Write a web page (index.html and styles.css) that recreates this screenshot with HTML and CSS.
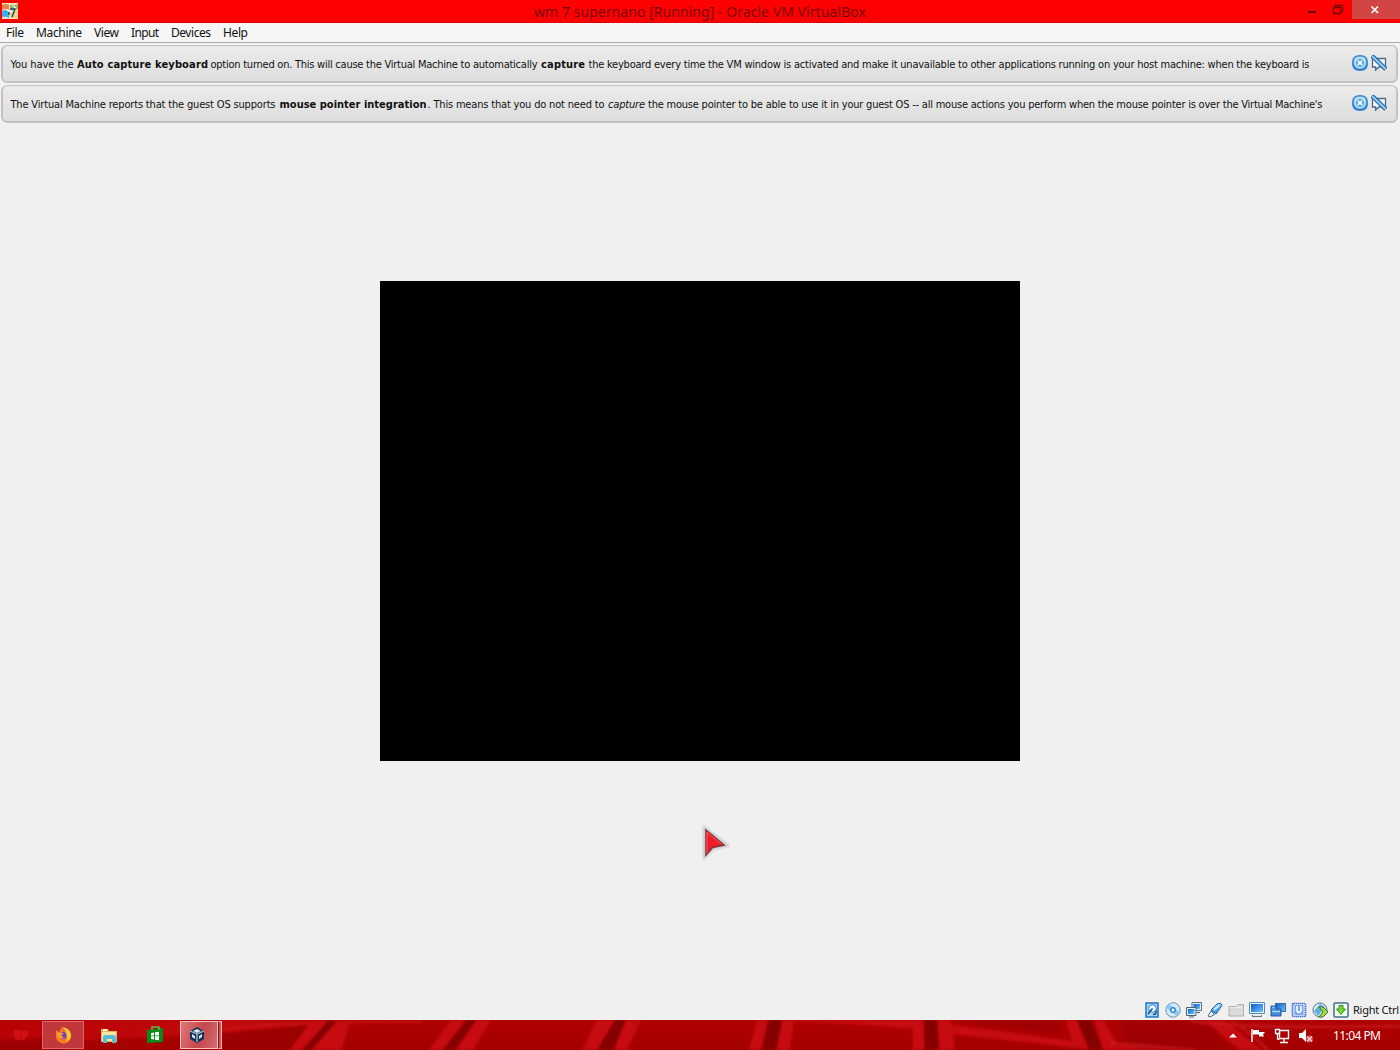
FILE: index.html
```html
<!DOCTYPE html>
<html lang="en">
<head>
<meta charset="utf-8">
<title>Oracle VM VirtualBox</title>
<link rel="stylesheet" href="styles.css">
</head>
<body>
<svg class="defs" width="0" height="0" aria-hidden="true">
  <defs>
    <linearGradient id="blue" x1="0" y1="0" x2="0" y2="1"><stop offset="0" stop-color="#9ad4fa"/><stop offset="1" stop-color="#2e8ade"/></linearGradient>
    <linearGradient id="screen" x1="0" y1="0" x2="1" y2="1"><stop offset="0" stop-color="#0a5cc8"/><stop offset="1" stop-color="#6cc4ff"/></linearGradient>
    <linearGradient id="wall" x1="0" y1="0" x2="0" y2="1"><stop offset="0" stop-color="#b00003"/><stop offset="1" stop-color="#a40000"/></linearGradient>
    <linearGradient id="sweep"><stop offset="0" stop-color="#b80206"/><stop offset=".6" stop-color="#c20a0e"/><stop offset="1" stop-color="#b00003"/></linearGradient>
    <symbol id="close" viewBox="0 0 16 16"><rect x=".8" y=".8" width="14.4" height="14.4" rx="5.5" fill="url(#blue)" stroke="#2a78c0" stroke-width="1.2"/><circle cx="8" cy="7.800" r="5" fill="#5aaae8" stroke="#e5f4ff" stroke-width="1.200"/><path d="M5.700 5.500l4.600 4.600m0-4.600l-4.600 4.600" stroke="#fff" stroke-width="1.600"/></symbol>
    <symbol id="mute" viewBox="0 0 16 16"><path d="M1.500 3.500h13v8.500H8l-3.500 3.200.3-3.200H1.500z" fill="#f8fafb" stroke="#4c6784" stroke-width="1.300"/><path d="M.8.800l14 13.400" stroke="#1f609f" stroke-width="4.400"/><path d="M1.200 1.200l13.300 12.700" stroke="#8bcbf6" stroke-width="2.200"/></symbol>
  </defs>
</svg>
<header class="titlebar">
  <svg class="app-icon" viewBox="0 0 16 16"><path fill="#eee2bc" d="M0 0h16v16H0z"/><path fill="#e5824e" d="M0 2q4-2 7 0v5q-3-2-7 0z"/><path fill="#83b968" d="M8 2q4 1 8-1v5q-4 2-8 1z"/><path fill="#35b4f4" d="M0 8q4-2 7 0v7q-3-2-7-1z"/><path fill="#eed487" d="M8 9q4 1 8-1v6q-4 2-8 1z"/><path d="M8 6h5l-3 8M7 7v5" fill="none" stroke="#34475c" stroke-width="1.500"/><path d="M5 7l4 2M11 3l3 2" stroke="#fff" stroke-width="1.500"/></svg>
  <svg class="caption" width="340" height="23"><text x="4" y="17" textLength="332">wm 7 supernano [Running] - Oracle VM VirtualBox</text></svg>
  <div class="controls">
    <svg width="52" height="19" viewBox="0 0 52 19"><path d="M8 12h8" stroke="#650000" stroke-width="2"/><path d="M33.500 7.500h7v6h-7zM35.500 7V5.500h7v6H41" fill="none" stroke="#780000" stroke-width="1.300"/></svg>
    <div class="close-window"><svg width="10" height="10" viewBox="0 0 10 10"><path d="M1.500 1.500l6.500 6.500M8 1.500L1.500 8" stroke="#fff" stroke-width="1.700"/></svg></div>
  </div>
</header>
<nav class="menubar">
  <svg width="260" height="19"><text x="6" y="14" textLength="18">File</text><text x="36" y="14" textLength="46">Machine</text><text x="94" y="14" textLength="25">View</text><text x="131" y="14" textLength="28">Input</text><text x="171" y="14" textLength="40">Devices</text><text x="223" y="14" textLength="25">Help</text></svg>
</nav>
<section class="notices">
  <div class="notice">
    <svg class="message" width="1340" height="36"><text x="7.500" y="22" textLength="63">You have the</text><text class="bold" x="74" y="22" textLength="131">Auto capture keyboard</text><text x="207.500" y="22" textLength="327">option turned on. This will cause the Virtual Machine to automatically</text><text class="bold" x="538" y="22" textLength="44">capture</text><text x="585.500" y="22" textLength="721">the keyboard every time the VM window is activated and make it unavailable to other applications running on your host machine: when the keyboard is</text></svg>
    <div class="actions"><svg><use href="#close"/></svg><svg><use href="#mute"/></svg></div>
  </div>
  <div class="notice">
    <svg class="message" width="1340" height="36"><text x="7.500" y="22" textLength="265">The Virtual Machine reports that the guest OS supports</text><text class="bold" x="276.500" y="22" textLength="147">mouse pointer integration</text><text x="424.500" y="22" textLength="177">. This means that you do not need to</text><text class="italic" x="605" y="22" textLength="37">capture</text><text x="645" y="22" textLength="674.500">the mouse pointer to be able to use it in your guest OS -- all mouse actions you perform when the mouse pointer is over the Virtual Machine's</text></svg>
    <div class="actions"><svg><use href="#close"/></svg><svg><use href="#mute"/></svg></div>
  </div>
</section>
<main class="machine">
  <div class="display"></div>
  <svg class="pointer" viewBox="0 0 32 38"><path class="pointer-glow" d="M7 5v27l8-8 13-3z"/><path d="M8 6v25l6.500-7.500L26 21z" fill="#ef1c29" stroke="#8c3036" stroke-width="1.500"/><path d="M9 29V8l14 12" fill="none" stroke="#ff5961"/></svg>
</main>
<footer class="statusbar">
  <div class="indicators">
    <svg viewBox="0 0 16 16"><path d="M2 1h12v14H2z" fill="#a6d6f6" stroke="#1e74c4" stroke-width="1.500"/><circle cx="8.500" cy="6.500" r="3.800" fill="#eaf7ff" stroke="#3b82c2"/><path d="M4 12l4.500-5.500M9 12.500q4 0 3-4" fill="none" stroke="#174f8e" stroke-width="1.500"/></svg>
    <svg viewBox="0 0 16 16"><circle cx="8" cy="8" r="7.200" fill="#d5ebfa" stroke="#6695bd"/><path d="M8 8L3 4m5 4l5 4" stroke="#8fccf4" stroke-width="5"/><circle cx="8" cy="8" r="3" fill="#2f8ad8"/><circle cx="8" cy="8" r="1.500" fill="#fff"/></svg>
    <svg viewBox="0 0 16 16"><path d="M6 .5h9.500v8H6z" fill="#e4f2fb" stroke="#5b6f80"/><path d="M7.500 2h6.500v5H7.500z" fill="url(#screen)"/><path d="M.5 5.500h9.500v8H.5z" fill="#e4f2fb" stroke="#4b6070"/><path d="M2 7h6.500v5H2z" fill="url(#screen)"/><path d="M3 15h5M11 10.500h3" stroke="#4c6472"/></svg>
    <svg viewBox="0 0 16 16"><path d="M4 8l6-6q4-2 5 1.500L9 12z" fill="url(#blue)" stroke="#205da8"/><path d="M4 9l3.500 3.500L3 15l-2-1z" fill="#edf2f5" stroke="#48697e"/><path d="M7 8l5-5" stroke="#c5e9ff" stroke-width="2"/></svg>
    <svg viewBox="0 0 16 16"><path d="M1 4.500h7l2-2h5.500V14H1z" fill="#dadada" stroke="#b0b0b0"/><path d="M2 5.500h12" stroke="#eee"/></svg>
    <svg viewBox="0 0 16 16"><path d="M.5.500h15v11H.5z" fill="#e7f2fa" stroke="#5d88b0"/><path d="M2 2h12v8H2z" fill="url(#screen)"/><path d="M3 14h10" stroke="#657685" stroke-width="2"/><path d="M4 13.500h8" stroke="#dce9f0"/></svg>
    <svg viewBox="0 0 16 16"><path d="M5.500 1.500h10v8h-10z" fill="url(#screen)" stroke="#3b6aa5"/><path d="M1 4h5v3h5v7H1z" fill="#438bdc" stroke="#2858a0"/><path d="M2.500 5.500h2M2 9.500h8" stroke="#a4d5f7" stroke-width="1.500"/></svg>
    <svg viewBox="0 0 16 16"><rect x="1.500" y="1.500" width="13" height="13" rx="1" fill="#dde7ff" stroke="#4c72ce" stroke-width="1.700" stroke-dasharray="1.500 .5"/><path d="M3.500 3h9v10h-9z" fill="#7aa6ed"/><path d="M6 4v5q2 3 4 0V4" fill="none" stroke="#fff" stroke-width="1.600"/></svg>
    <svg viewBox="0 0 16 16"><circle cx="8" cy="8" r="7" fill="#e0edf4" stroke="#54748a"/><path d="M2 9l6-7 5 3-7 9" fill="#62afe0"/><path d="M7 5h4l5 5-5 5H7l4-5z" fill="#9bdc40" stroke="#3f7525"/></svg>
    <svg viewBox="0 0 16 16"><rect x="1" y="1" width="14" height="14" rx="1" fill="#f2faf2" stroke="#40718f" stroke-width="1.500"/><path d="M6 3.500h4v3.500h2.500L8 12.500 3.500 7H6z" fill="#78d932" stroke="#3b8c20"/></svg>
  </div>
  <svg class="host-key" width="49" height="19"><text x="2" y="13" textLength="46">Right Ctrl</text></svg>
</footer>
<div class="taskbar">
  <svg class="wallpaper" viewBox="0 0 1400 30" preserveAspectRatio="none">
    <path fill="url(#wall)" d="M0 0h1400v30H0z"/><path fill="url(#sweep)" d="M0 0h390v3q-90 2-170 10L0 25z"/><path fill="#940000" d="M0 20l60-4v14H0zM222 14q60-6 90-10l-22 26h-68z" opacity=".6"/>
    <path d="M222 9q60-6 150-7h50" fill="none" stroke="#cf1a20" stroke-width="2" opacity=".6"/>
    <g fill="#c60b11"><path d="M311 1h17l-24 29h-14zM337 1h13l-8 29h-31zM451 0h15l-23 30h-14zM476 0h15l-18 30h-17zM597 0h18l-15 30h-18zM626 0h15l-14 30h-13zM757 0h11l-7 30h-12zM782 0h12l-4 30h-13zM912 0h12v30h-11zM937 0h14l4 30h-16z"/><path d="M794 0h120v9q-60-6-120-7zM937 3l144 19 85 8h-70l-144-16h-15zM1066 0h11l11 28h-14zM1094 0h10l14 25h-16zM1204 0h20l38 30h-22z"/></g>
    <g fill="#860002"><path d="M328 1h9l-26 29h-9zM466 0h10l-21 30h-12zM615 0h11l-13 30h-16zM769 0h13l-6 30h-14zM924 0h13l2 30h-14zM1077 0h14l12 30h-14z"/></g>
    <path d="M950 1h110v12q-60-5-110-12M1120 1h87l24 29h-30l-75-8z" fill="#8f0003" opacity=".4"/>
    <path d="M1110 23l85 7M1232 1q20 13 36 29M1190 1q50 8 210 5" fill="none" stroke="#cf222a" stroke-width="3" opacity=".55"/>
  </svg>
  <div class="apps">
    <div class="app start"><svg viewBox="0 0 20 20"><path d="M2 5q5-2 7 0v5H2zM9.500 5H18v5H9.500zM3 10h6v6q-4 0-6-2zM9.500 10H17q0 5-7.500 6z" fill="#e01820"/></svg></div>
    <div class="app open"><svg viewBox="0 0 18 18"><path d="M2 4l3 2 3-5q1 4 5 4l1-2q5 7 2 11-4 5-9 3-6-3-5-9z" fill="#ff7824"/><path d="M8 1q8 1 9 8 0 5-5 7 4-8-4-15" fill="#ffc936"/><circle cx="8.500" cy="9.500" r="3.800" fill="#6742c9"/><path d="M3 7q4-2 7 1l-3 1 3 3q-5 2-7-2" fill="#ff9b22"/></svg></div>
    <div class="app"><svg viewBox="0 0 18 18"><path d="M1 3h7l1 2h8v11H1z" fill="#d8b85d"/><path d="M2 6h14v9H2z" fill="#ffe89b"/><path d="M3 17v-6q0-2 2-2h9q2 0 2 2v6h-4v-4H7v4z" fill="#57bdd6"/><path d="M3 3h4v2H3z" fill="#f3f3cf"/></svg></div>
    <div class="app"><svg viewBox="0 0 18 18"><path d="M1 4l16-2v14L1 17z" fill="#078b17"/><path d="M6 4V1h7v3" fill="none" stroke="#58b851" stroke-width="1.500"/><path d="M5 7l3-.500V9.500H5zM9 6.300l4-.600v3.800H9zM5 10.300h3v3.200L5 13zM9 10.300h4v4l-4-.600z" fill="#fff"/></svg></div>
    <div class="app open active"><svg viewBox="0 0 18 18"><path d="M9 1l7 4v8l-7 4-7-4V5z" fill="#173354"/><path d="M9 8v8M9 8L2 5m7 3l7-3" stroke="#a9c7dc" stroke-width="1.300"/><path d="M5 5l4-2 4 2-4 2zM4 8l3 2v3l-3-2zm7 2l3-2v3l-3 2z" fill="#d7e6ee"/></svg></div><div class="stack"></div>
  </div>
  <div class="tray">
    <svg width="86" height="22" viewBox="0 0 86 22"><path d="M1 12.500l4-4 4 4z" fill="#fff"/><path d="M24 4v13" stroke="#fff" stroke-width="1.500"/><path d="M25 5h6v2h6l-2 2.500 1 2h-5v-2h-6z" fill="#fff"/><path d="M51.500 5.500h9v8h-9zM56 14v3M52 17.500h8" fill="none" stroke="#fff" stroke-width="1.400"/><path d="M47.500 4.500h4v4h-4zM49.500 9v5h2" fill="#a9000b" stroke="#fff" stroke-width="1.300"/><path d="M71 8h3l4-4v13l-4-4h-3z" fill="#fff"/><circle cx="81.500" cy="14" r="3.500" fill="#d5454c"/><path d="M79 11.500l5 5m0-5l-5 5" stroke="#ffd0d0" stroke-width="1.500"/></svg>
    <svg class="clock" width="52" height="22"><text x="2" y="15" textLength="48">11:04 PM</text></svg>
  </div>
</div>
</body>
</html>
```
FILE: styles.css
```css
* { box-sizing: border-box; }
html, body { width: 100%; height: 100%; margin: 0; overflow: hidden; }
body { display: flex; flex-direction: column; background: #f0f0f0; color: #111; font-family: "Noto Sans", sans-serif; }
svg { display: block; flex-shrink: 0; }
text { fill: currentColor; }
.defs { position: absolute; }
.titlebar { height: 23px; flex: none; display: grid; grid-template-columns: 1fr 340px 1fr; background: #f00; border-bottom: 1px solid #df0000; }
.app-icon { width: 16px; height: 16px; margin: 3px 0 0 2px; }
.caption { color: #780000; font-size: 14px; }
.controls { display: flex; justify-content: flex-end; }
.close-window { width: 48px; height: 19px; padding-right: 2px; display: grid; place-items: center; background: #d34444; }
.menubar { height: 20px; flex: none; background: #f6f6f6; border-bottom: 1px solid #aaa; font-size: 12px; }
.notices { flex: none; display: flex; flex-direction: column; gap: 2px; padding: 2px 2px 0 1px; background: #f3f3f3; }
.notice { height: 38px; display: flex; align-items: center; justify-content: space-between; border: 2px solid #c2c2c2; border-top-width: 1px; border-radius: 6px; background: linear-gradient(#ebebeb, #dedede); }
.message { font: 11px "DejaVu Sans Condensed", "DejaVu Sans", sans-serif; font-stretch: condensed; }
.bold { font-weight: bold; }
.italic { font-style: italic; }
.actions { display: flex; gap: 3px; padding: 0 9px 2px 0; }
.actions svg { width: 16px; height: 16px; }
.machine { position: relative; flex: 1; padding-top: 158px; }
.display { width: 640px; height: 480px; margin: 0 auto; background: #000; }
.pointer { position: absolute; left: 698px; top: 701px; width: 32px; height: 38px; }
.pointer-glow { fill: #999; stroke: #b7b7b7; stroke-width: 4px; opacity: .7; filter: blur(1px); }
.statusbar { height: 20px; flex: none; display: flex; justify-content: flex-end; align-items: center; }
.indicators { display: flex; gap: 5px; }
.indicators svg { width: 16px; height: 16px; }
.host-key { margin-left: 2px; font-size: 11px; }
.taskbar { position: relative; height: 30px; flex: none; display: flex; justify-content: space-between; overflow: hidden; background: #a90000; }
.wallpaper { position: absolute; inset: 0; width: 100%; height: 30px; filter: blur(1px); }
.apps, .tray { position: relative; display: flex; align-items: center; }
.app { width: 46px; height: 28px; display: grid; place-items: center; }
.app svg { width: 18px; height: 18px; }
.start { width: 42px; }
.start svg { width: 22px; opacity: .6; }
.open { width: 42px; margin-right: 2px; border: 1px solid #df666a; background: #c0383c; }
.active { width: 38px; margin: 0 0 0 2px; border-color: #ffc1c1; background: linear-gradient(110deg, #e0777a, #c4484c 55%, #d46d70); }
.active svg { margin-right: 5px; }
.stack { width: 4px; height: 28px; border: 1px solid #ffb7b7; border-left-color: #930c10; background: #ca5558; }
.tray { padding: 2px 17px 0 0; }
.clock { margin-left: 17px; color: #fff; font-size: 12px; }
```
